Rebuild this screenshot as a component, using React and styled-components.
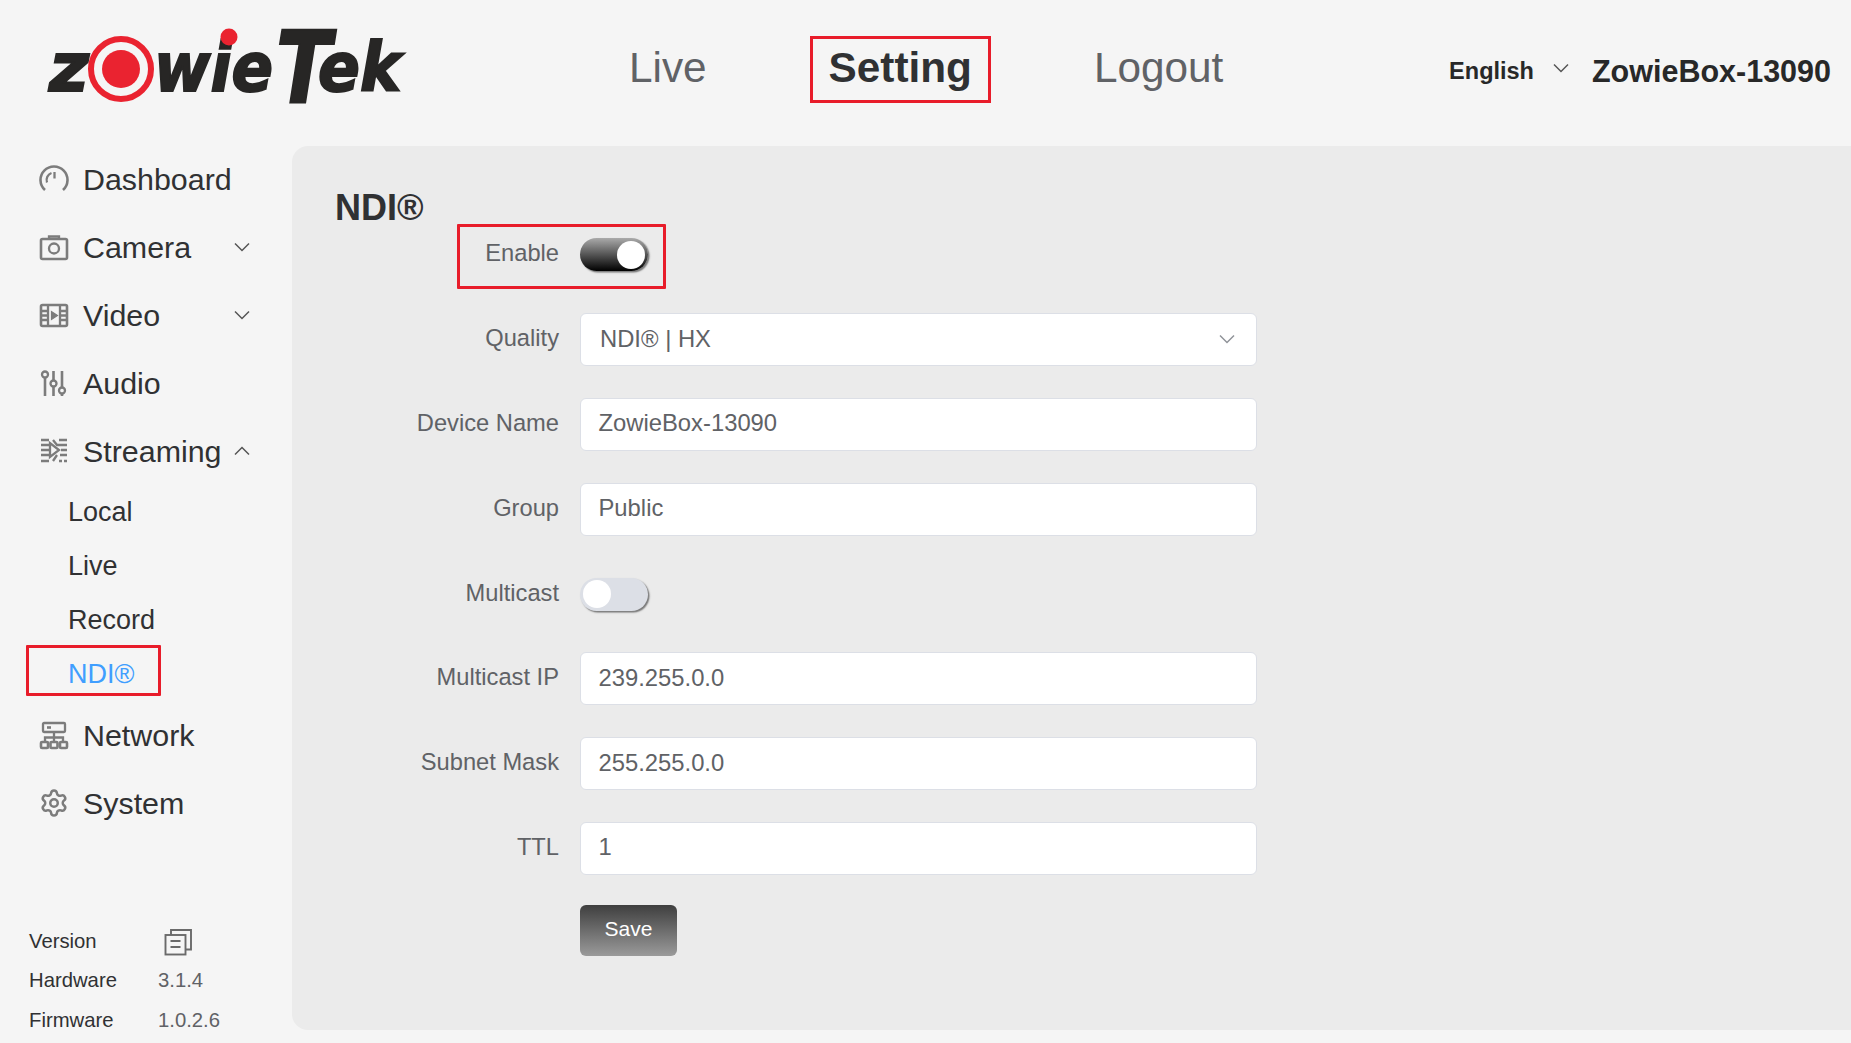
import React from "react";
import styled, { createGlobalStyle } from "styled-components";
import { Settings } from "lucide-react";

const Global = createGlobalStyle`
  html, body { margin: 0; padding: 0; background: #f5f5f5; }
  body { font-family: "Liberation Sans", Arial, sans-serif; overflow: hidden; }
  * { box-sizing: border-box; }
`;

const Page = styled.div`
  width: 1851px;
  height: 1043px;
  display: flex;
  flex-direction: column;
  background: #f5f5f5;
  overflow: hidden;
`;

const Header = styled.header`
  height: 146px;
  flex: none;
  display: flex;
  align-items: center;
  padding-right: 20px;
`;

const LogoSlot = styled.div`
  width: 610px;
  height: 146px;
  flex: none;
`;

const TopNav = styled.nav`
  display: flex;
  gap: 84px;
  align-items: center;
  margin-top: -7px;
`;

const TopLink = styled.div`
  height: 67px;
  padding: 0 16px 3px;
  display: flex;
  align-items: center;
  border: 3px solid ${(p) => (p.$active ? "#e81c2a" : "transparent")};
  font-size: 42.3px;
  font-weight: ${(p) => (p.$active ? 700 : 400)};
  color: ${(p) => (p.$active ? "#303133" : "#606266")};
`;

const HeaderRight = styled.div`
  margin-left: auto;
  margin-top: -4px;
  display: flex;
  align-items: center;
`;

const Lang = styled.span`
  font-size: 23.5px;
  font-weight: 700;
  color: #282828;
`;

const DeviceName = styled.span`
  font-size: 30.5px;
  font-weight: 700;
  color: #282828;
  margin-left: 22px;
`;

const Chevron = styled.svg`
  width: ${(p) => p.$w || 16}px;
  height: 10px;
  flex: none;
  fill: none;
  stroke: ${(p) => p.$color || "#555"};
  stroke-width: 1.5;
`;

const LangChevron = styled(Chevron)`
  width: 18px;
  margin-left: 18px;
  margin-top: -6px;
`;

const Body = styled.div`
  flex: 1;
  display: flex;
  min-height: 0;
`;

const Aside = styled.aside`
  width: 292px;
  flex: none;
  display: flex;
  flex-direction: column;
  justify-content: space-between;
`;

const Menu = styled.div`
  margin-top: -1px;
`;

const MenuItem = styled.div`
  height: 68px;
  display: flex;
  align-items: center;
  padding: 0 42px 0 39px;
  font-size: 30.4px;
  color: #303133;
`;

const IconBox = styled.svg`
  width: 30px;
  height: 30px;
  flex: none;
  margin-right: 14px;
  fill: none;
  stroke: #7c7c7c;
  stroke-width: 2.3;
`;

const GearBox = styled.span`
  width: 30px;
  height: 30px;
  flex: none;
  margin-right: 14px;
  display: flex;
  align-items: center;
  justify-content: center;
  color: #7c7c7c;
`;

const MenuChevron = styled(Chevron)`
  margin-left: auto;
  flex: none;
`;

const SubItem = styled.div`
  position: relative;
  height: 54px;
  display: flex;
  align-items: center;
  padding-left: 68px;
  font-size: 27px;
  color: ${(p) => (p.$active ? "#409eff" : "#303133")};
`;

const Marker = styled.span`
  position: absolute;
  border: 3.5px solid #e81c2a;
  border-radius: 1px;
  pointer-events: none;
  left: ${(p) => p.$l}px;
  top: ${(p) => p.$t}px;
  width: ${(p) => p.$w}px;
  height: ${(p) => p.$h}px;
`;

const VersionBlock = styled.div`
  padding: 0 0 3px 29px;
  display: grid;
  grid-template-columns: 129px 1fr;
  grid-auto-rows: 39.5px;
  align-items: center;
  font-size: 20.3px;
  color: #303133;
`;

const VersionValue = styled.span`
  color: #606266;
`;

const CopyIcon = styled.svg`
  width: 28px;
  height: 28px;
  margin: 2px 0 0 6px;
  fill: none;
  stroke: #6a6a6a;
  stroke-width: 1.9;
`;

const Panel = styled.main`
  flex: 1;
  height: 884px;
  background: #ebebeb;
  border-radius: 16px 0 0 16px;
  padding: 42px 0 0 43px;
`;

const Title = styled.h2`
  margin: 0 0 -15.5px;
  font-size: 36px;
  line-height: 40px;
  font-weight: 700;
  color: #303133;
`;

const Row = styled.div`
  position: relative;
  height: 84.8px;
  display: flex;
  align-items: center;
`;

const Label = styled.label`
  width: 224px;
  flex: none;
  text-align: right;
  font-size: 23.7px;
  color: #606266;
  margin-right: 21px;
  padding-bottom: 2px;
`;

const Field = styled.div`
  width: 677px;
  height: 53px;
  display: flex;
  align-items: center;
  justify-content: space-between;
  padding: 0 ${(p) => p.$padR || 17}px 2px ${(p) => p.$pad || 17.5}px;
  background: #fff;
  border: 1.5px solid #dcdfe6;
  border-radius: 6px;
  font-size: 23.8px;
  color: #606266;
`;

const Switch = styled.div`
  width: 68px;
  height: 33px;
  border-radius: 17px;
  display: flex;
  align-items: center;
  justify-content: ${(p) => (p.$on ? "flex-end" : "flex-start")};
  padding: 0 3px;
  background: ${(p) => (p.$on ? "linear-gradient(#aaa, #000)" : "#dcdfe6")};
  box-shadow: 1.5px 1.5px 1.5px #777;
`;

const Knob = styled.span`
  width: 28px;
  height: 28px;
  border-radius: 50%;
  background: #fff;
`;

const SaveRow = styled.div`
  height: 79px;
  padding-left: 245px;
  display: flex;
  align-items: center;
`;

const SaveButton = styled.button`
  width: 97px;
  height: 51px;
  border: none;
  border-radius: 6px;
  padding: 0 0 3px;
  background: linear-gradient(#3f3f3f, #9a9a9a);
  color: #fff;
  font: 400 21px "Liberation Sans", Arial, sans-serif;
`;

const Logo = () => (
  <svg width="450" height="146" viewBox="0 0 450 146" role="img" aria-label="ZowieTek logo">
    <text
      fontFamily="'DejaVu Sans', sans-serif"
      fontWeight="700"
      fontStyle="italic"
      fontSize="68"
      fill="#272625"
      stroke="#272625"
      strokeWidth="2"
    >
      <tspan x="49" y="91" textLength="40" lengthAdjust="spacingAndGlyphs">z</tspan>
      <tspan x="154" y="91" textLength="119" lengthAdjust="spacingAndGlyphs">wie</tspan>
      <tspan x="276" y="103" fontSize="100" textLength="55" lengthAdjust="spacingAndGlyphs">T</tspan>
      <tspan x="318" y="91" textLength="83" lengthAdjust="spacingAndGlyphs">ek</tspan>
    </text>
    <circle cx="121" cy="69" r="30" fill="#f5f5f5" stroke="#ea2330" strokeWidth="6" />
    <circle cx="121" cy="69" r="19" fill="#ea2330" />
    <circle cx="229" cy="37" r="8.5" fill="#ea2330" />
  </svg>
);

const Down = ({ as: C = MenuChevron, color }) => (
  <C viewBox="0 0 16 10" $color={color}><path d="M1 1.5 8 8.5 15 1.5" /></C>
);
const Up = () => (
  <MenuChevron viewBox="0 0 16 10"><path d="M1 8.5 8 1.5 15 8.5" /></MenuChevron>
);

const DashboardIcon = () => (
  <IconBox viewBox="0 0 30 30">
    <path d="M6 26A13.5 13.5 0 1 1 24 26" strokeWidth="2.6" />
    <path d="M8 18.5A7.5 7.5 0 0 1 12.5 9" />
    <path d="M15.5 8v6.5" />
  </IconBox>
);
const CameraIcon = () => (
  <IconBox viewBox="0 0 30 30">
    <rect x="2" y="7" width="26" height="20" rx="1.5" strokeWidth="2.6" />
    <path d="M10 7V4.5h10V7" />
    <circle cx="15" cy="16.5" r="5" />
  </IconBox>
);
const VideoIcon = () => (
  <IconBox viewBox="0 0 30 30">
    <rect x="2" y="5" width="26" height="21" rx="1.5" strokeWidth="2.6" />
    <path d="M9 5v21M21 5v21M2 11h7M2 15.5h7M2 20h7M21 11h7M21 15.5h7M21 20h7" />
    <path d="M12.5 11.5v8l6-4z" fill="#7c7c7c" strokeWidth="1.2" />
  </IconBox>
);
const AudioIcon = () => (
  <IconBox viewBox="0 0 30 30">
    <circle cx="6" cy="6.5" r="3" />
    <path d="M6 9.5V28" strokeWidth="2.6" />
    <circle cx="14.5" cy="15.5" r="3" />
    <path d="M14.5 3v9.5M14.5 18.5V28" strokeWidth="2.6" />
    <circle cx="23" cy="22.5" r="3" />
    <path d="M23 3v16.5M23 25.5V28" strokeWidth="2.6" />
  </IconBox>
);
const StreamingIcon = () => (
  <IconBox viewBox="0 0 30 30">
    <path d="M2 4h8M14 4l4 5h10M20 4h8M2 9h8M2 14h8M22 14h6M2 19h8M21 19h7M2 25h8M14 25l4-6M20 25h3M25 25h3" />
    <path d="M11 7v14l9-7z" />
  </IconBox>
);
const NetworkIcon = () => (
  <IconBox viewBox="0 0 30 30">
    <rect x="4" y="3" width="22" height="9" rx="1" />
    <path d="M8 7.5h4" strokeWidth="2.6" />
    <path d="M15 12v10M6 22v-4.5h18V22" />
    <rect x="2" y="22" width="7" height="6" rx="1" strokeWidth="2.6" />
    <rect x="11.5" y="22" width="7" height="6" rx="1" strokeWidth="2.6" />
    <rect x="21" y="22" width="7" height="6" rx="1" strokeWidth="2.6" />
  </IconBox>
);

const fields = [
  ["Device Name", "ZowieBox-13090"],
  ["Group", "Public"],
];
const fields2 = [
  ["Multicast IP", "239.255.0.0"],
  ["Subnet Mask", "255.255.0.0"],
  ["TTL", "1"],
];

export default function App() {
  return (
    <Page>
      <Global />
      <Header>
        <LogoSlot><Logo /></LogoSlot>
        <TopNav>
          <TopLink>Live</TopLink>
          <TopLink $active>Setting</TopLink>
          <TopLink>Logout</TopLink>
        </TopNav>
        <HeaderRight>
          <Lang>English</Lang>
          <Down as={LangChevron} />
          <DeviceName>ZowieBox-13090</DeviceName>
        </HeaderRight>
      </Header>
      <Body>
        <Aside>
          <Menu>
            <MenuItem><DashboardIcon />Dashboard</MenuItem>
            <MenuItem><CameraIcon />Camera<Down /></MenuItem>
            <MenuItem><VideoIcon />Video<Down /></MenuItem>
            <MenuItem><AudioIcon />Audio</MenuItem>
            <MenuItem><StreamingIcon />Streaming<Up /></MenuItem>
            <SubItem>Local</SubItem>
            <SubItem>Live</SubItem>
            <SubItem>Record</SubItem>
            <SubItem $active>
              NDI®
              <Marker $l={26} $t={-2} $w={135} $h={51} />
            </SubItem>
            <MenuItem><NetworkIcon />Network</MenuItem>
            <MenuItem><GearBox><Settings size={32} strokeWidth={2} /></GearBox>System</MenuItem>
          </Menu>
          <VersionBlock>
            <span>Version</span>
            <CopyIcon viewBox="0 0 28 28">
              <rect x="1.5" y="7" width="20" height="19.5" />
              <path d="M7 7V2h20v19.5h-5.5" />
              <path d="M6.5 13h10M6.5 19h10" strokeWidth="2" />
            </CopyIcon>
            <span>Hardware</span>
            <VersionValue>3.1.4</VersionValue>
            <span>Firmware</span>
            <VersionValue>1.0.2.6</VersionValue>
          </VersionBlock>
        </Aside>
        <Panel>
          <Title>NDI®</Title>
          <Row>
            <Label>Enable</Label>
            <Switch $on><Knob /></Switch>
            <Marker $l={122} $t={11} $w={209} $h={65} />
          </Row>
          <Row>
            <Label>Quality</Label>
            <Field $pad={19} $padR={21}>
              NDI® | HX
              <Down as={Chevron} color="#909399" />
            </Field>
          </Row>
          {fields.map(([l, v]) => (
            <Row key={l}><Label>{l}</Label><Field>{v}</Field></Row>
          ))}
          <Row>
            <Label>Multicast</Label>
            <Switch><Knob /></Switch>
          </Row>
          {fields2.map(([l, v]) => (
            <Row key={l}><Label>{l}</Label><Field>{v}</Field></Row>
          ))}
          <SaveRow><SaveButton>Save</SaveButton></SaveRow>
        </Panel>
      </Body>
    </Page>
  );
}
